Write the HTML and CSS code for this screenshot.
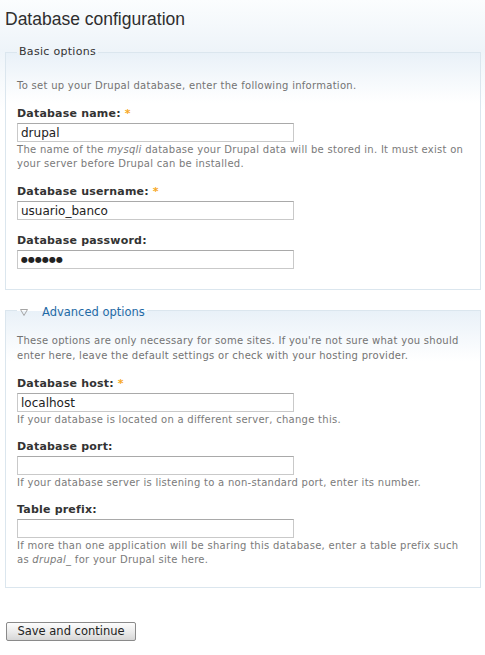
FILE: index.html
```html
<!DOCTYPE html>
<html>
<head>
<meta charset="utf-8">
<link rel="stylesheet" href="styles.css">
</head>
<body>
<div class="page">
  <h1 class="title">Database configuration</h1>
  <form class="form">
    <fieldset class="box">
      <legend class="legend">Basic options</legend>
      <p class="intro">To set up your Drupal database, enter the following information.</p>
      <div class="item">
        <label class="label">Database name: <span class="req">*</span></label>
        <input class="text" type="text" value="drupal">
        <div class="desc">The name of the <em>mysqli</em> database your Drupal data will be stored in. It must exist on<br>your server before Drupal can be installed.</div>
      </div>
      <div class="item">
        <label class="label">Database username: <span class="req">*</span></label>
        <input class="text" type="text" value="usuario_banco">
      </div>
      <div class="item">
        <label class="label">Database password:</label>
        <input class="text pass" type="text" value="&#9679;&#9679;&#9679;&#9679;&#9679;&#9679;">
      </div>
    </fieldset>

    <fieldset class="box adv">
      <legend class="legend"><svg class="tri" width="8" height="7" viewBox="0 0 8 7"><polygon points="0.5,0.5 7.5,0.5 4,6.5" fill="none" stroke="#a5a5a5" stroke-width="1"/></svg><a class="toggle">Advanced options</a></legend>
      <p class="intro">These options are only necessary for some sites. If you're not sure what you should<br>enter here, leave the default settings or check with your hosting provider.</p>
      <div class="item">
        <label class="label">Database host: <span class="req">*</span></label>
        <input class="text" type="text" value="localhost">
        <div class="desc">If your database is located on a different server, change this.</div>
      </div>
      <div class="item">
        <label class="label">Database port:</label>
        <input class="text" type="text" value="">
        <div class="desc">If your database server is listening to a non-standard port, enter its number.</div>
      </div>
      <div class="item">
        <label class="label">Table prefix:</label>
        <input class="text" type="text" value="">
        <div class="desc">If more than one application will be sharing this database, enter a table prefix such<br>as <em>drupal_</em> for your Drupal site here.</div>
      </div>
    </fieldset>

    <div class="actions">
      <button class="btn" type="button">Save and continue</button>
    </div>
  </form>
</div>
</body>
</html>
```

FILE: styles.css
```css
html, body {
  margin: 0;
  padding: 0;
}
body {
  background: linear-gradient(to bottom, #fbfdfe 0, #eef4f9 50px, #ffffff 110px);
  font-family: "DejaVu Sans", Verdana, sans-serif;
  color: #333;
  min-height: 655px;
}
.page {
  padding: 0 4px 0 5px;
}
.title {
  margin: 0;
  padding: 8px 0 0 0;
  font-family: "Liberation Sans", Arial, sans-serif;
  font-weight: normal;
  font-size: 17.5px;
  line-height: 22px;
  color: #2e2e2e;
}
.form {
  margin-top: 15px;
}
.box {
  margin: 0;
  padding: 0 6px 20px 11px;
  border: 1px solid #dbe6ee;
  background: linear-gradient(to bottom, #e9f1f8 0, #ffffff 50px);
  min-width: 0;
}
.box.adv {
  margin-top: 10px;
}
.legend {
  padding: 0 2px;
  margin: 0;
  font-size: 11px;
  line-height: 14px;
  letter-spacing: 0.3px;
  color: #333;
}
.adv .legend {
  padding-top: 5px;
}
.tri {
  display: inline-block;
  vertical-align: 0;
  margin: 0 14px 0 1px;
}
.toggle {
  color: #1f6aa5;
  font-size: 11.5px;
  letter-spacing: 0;
}
.intro {
  margin: 19px 0 14px 0;
  font-size: 10px;
  line-height: 15px;
  letter-spacing: 0.28px;
  color: #737373;
}
.adv .intro {
  margin-top: 13px;
}
.item {
  margin-bottom: 14px;
}
.adv .item {
  margin-bottom: 13px;
}
.box .item:last-child {
  margin-bottom: 0;
}
.label {
  display: block;
  font-weight: bold;
  font-size: 11px;
  line-height: 14px;
  letter-spacing: 0.2px;
  color: #333;
  margin-bottom: 2px;
}
.req {
  color: #f7a823;
}
.text {
  display: block;
  box-sizing: border-box;
  width: 277px;
  height: 19px;
  margin: 0;
  padding: 0 3px;
  border: 1px solid #c9c9c9;
  border-top-color: #a9a9a9;
  background: #fff;
  font-family: "DejaVu Sans", Verdana, sans-serif;
  font-size: 12px;
  color: #222;
}
.text.pass {
  font-size: 8px;
}
.desc {
  margin-top: 1px;
  font-size: 10px;
  line-height: 14px;
  letter-spacing: 0.28px;
  color: #7a7a7a;
  white-space: nowrap;
}
.actions {
  padding-top: 34px;
}
.btn {
  display: block;
  margin: 0 0 0 1px;
  height: 19px;
  width: 130px;
  padding: 0;
  border: 1px solid #8a8a8a;
  border-radius: 2px;
  background: linear-gradient(to bottom, #fdfdfd 0, #e8e8e8 60%, #d6d6d6 100%);
  font-family: "DejaVu Sans", Verdana, sans-serif;
  font-size: 11.5px;
  line-height: 17px;
  color: #222;
}
```
